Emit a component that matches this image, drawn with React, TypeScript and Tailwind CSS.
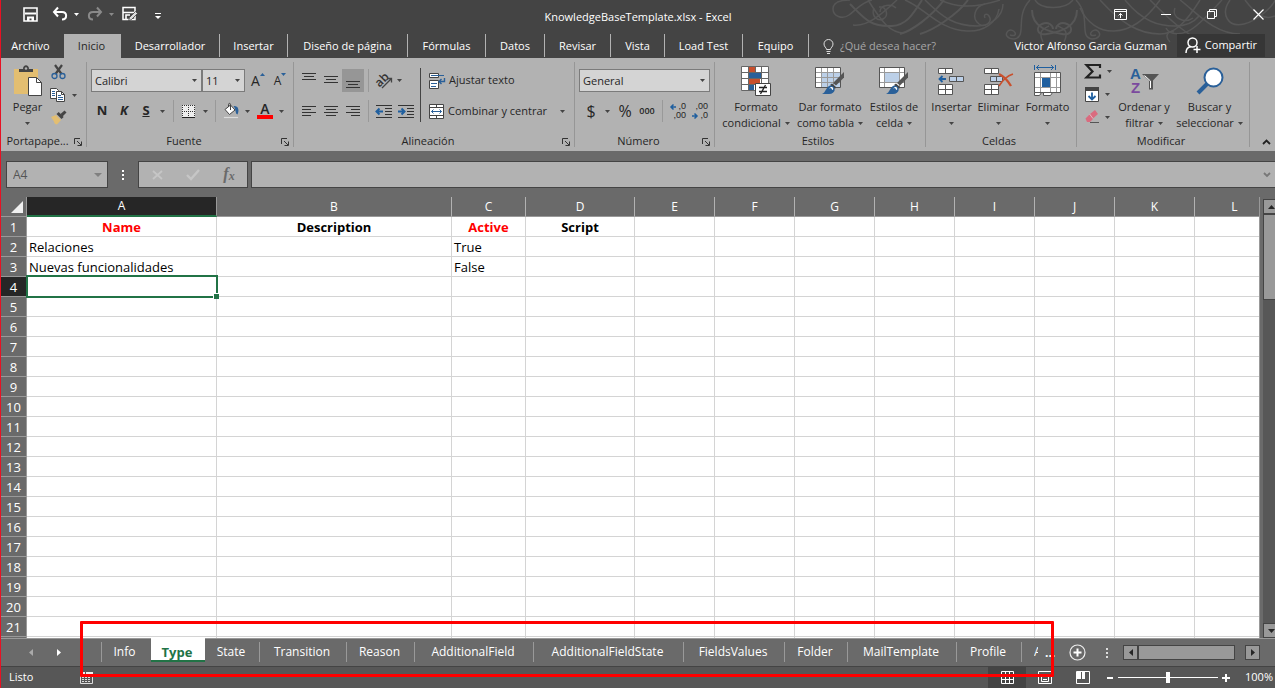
import React from "react";

/* ---------- shared bits ---------- */

function Arrow({ className = "text-[#444]" }: { className?: string }) {
  return (
    <svg width="5" height="3" viewBox="0 0 5 3" className={`shrink-0 ${className}`} aria-hidden="true">
      <path d="M0 0h5L2.5 3z" fill="currentColor" />
    </svg>
  );
}

function Svg({ w, h, children }: { w: number; h: number; children: React.ReactNode }) {
  return (
    <svg width={w} height={h} viewBox={`0 0 ${w} ${h}`} fill="none" className="shrink-0 overflow-visible" aria-hidden="true">
      {children}
    </svg>
  );
}

function Tool({ label, className = "", children }: { label: string; className?: string; children: React.ReactNode }) {
  return (
    <button type="button" aria-label={label} className={`flex shrink-0 items-center justify-center self-stretch ${className}`}>
      {children}
    </button>
  );
}

function Rule({ className = "mx-1" }: { className?: string }) {
  return <span className={`w-px shrink-0 self-stretch bg-[#999] ${className}`} />;
}

function Combo({ label, value, className }: { label: string; value: string; className: string }) {
  return (
    <label className={`relative flex h-full items-center ${className}`}>
      <select
        aria-label={label}
        className="h-full w-full appearance-none border border-[#7b7b7b] bg-[#d4d4d4] px-[3px] text-[11px] leading-none text-[#262626] outline-none"
      >
        <option>{value}</option>
      </select>
      <span className="pointer-events-none absolute right-[5px]">
        <Arrow />
      </span>
    </label>
  );
}

function Group({
  label,
  className,
  launcher = false,
  children,
}: {
  label: string;
  className: string;
  launcher?: boolean;
  children: React.ReactNode;
}) {
  return (
    <section className={`flex shrink-0 ${className}`}>
      <div className="flex min-w-0 flex-1 flex-col">
        <div className="h-[73px]">{children}</div>
        <div className="flex h-5 items-center pt-px pr-1">
          <h2 className="flex-1 truncate text-center">{label}</h2>
          {launcher && (
            <button type="button" aria-label={`Opciones de ${label}`}>
              <Svg w={8} h={8}>
                <path d="M.5 6V.5H6M3 3l4 4M7.5 3.5v4h-4" stroke="#333" />
              </Svg>
            </button>
          )}
        </div>
      </div>
      <span className="mt-1 mb-1 w-px bg-[#969696]" />
    </section>
  );
}

function Big({
  icon,
  first,
  second,
  className,
}: {
  icon: React.ReactNode;
  first: string;
  second?: string;
  className: string;
}) {
  return (
    <button type="button" className={`flex shrink-0 flex-col items-center whitespace-nowrap pt-[7px] leading-4 ${className}`}>
      <span className="mb-0.5 flex h-8 items-center">{icon}</span>
      <span>{first}</span>
      <span className="flex h-4 items-center gap-1">
        {second}
        <Arrow />
      </span>
    </button>
  );
}

/* ---------- icons ---------- */

const Clipboard = () => (
  <Svg w={30} h={32}>
    <path d="M1 4h24v25H1z" fill="#e3be71" />
    <path d="M6 7V4h4c0-5 6-5 6 0h4v3z" fill="#444" />
    <circle cx="13" cy="3.5" r="1.2" fill="#b2b2b2" />
    <path d="M15.500 12.500h8l5 5v13h-13z" fill="#fff" stroke="#444" />
    <path d="M23.500 12.500v5h5" stroke="#444" />
  </Svg>
);

const Scissors = () => (
  <Svg w={15} h={16}>
    <path d="M4 1l6.500 9M11 1l-6.500 9" stroke="#444" strokeWidth="2.200" />
    <circle cx="3.500" cy="12" r="2.500" stroke="#2a6099" strokeWidth="1.300" />
    <circle cx="11.500" cy="12" r="2.500" stroke="#2a6099" strokeWidth="1.300" />
  </Svg>
);

const Copy = () => (
  <Svg w={16} h={14}>
    <path d="M.5.5h6l2 2v8h-8z" fill="#fff" stroke="#444" />
    <path d="M2 3.500h3M2 5.500h3M2 7.500h3" stroke="#2a6099" />
    <path d="M6.500 3.500h5l3 3v7h-8z" fill="#fff" stroke="#444" />
    <path d="M11.500 3.500v3h3" stroke="#444" />
    <path d="M8 7.500h3M8 9.500h5M8 11.500h5" stroke="#2a6099" />
  </Svg>
);

const Brush = () => (
  <Svg w={16} h={15}>
    <path d="M0 7l5-2 5 5-4 4.500c-2 0-3-1.500-3-3z" fill="#e3be71" />
    <path d="M5.500 4l2.200-2 5 5-2.200 2z" fill="#444" />
    <path d="M9.500 4L13.500.500l2 2-4 4z" fill="#444" />
  </Svg>
);

const Borders = () => (
  <Svg w={13} h={13}>
    <path d="M0 0h13v13H0z" fill="#eee" />
    <path d="M0 .5h13M0 6.500h13M.5 0v12M6.500 0v12M12.500 0v12" stroke="#333" strokeDasharray="1 1" />
    <path d="M0 12.500h13" stroke="#222" />
  </Svg>
);

const Bucket = () => (
  <Svg w={16} h={16}>
    <path d="M2 6.500L7.500 2l4.500 5-5.500 4.500z" fill="#fff" stroke="#444" />
    <path d="M7.500 7V1.500c0-1.500-2-1.500-2 0V4" stroke="#444" />
    <path d="M10.500 3c5-.5 6 4 4 8.500-2.500-1-1-4-4-8.500z" fill="#2a6099" />
    <path d="M.5 13.500h15v2H.5z" fill="#ddd" stroke="#aaa" strokeWidth=".6" />
  </Svg>
);

function Lines({ rows, h = 12 }: { rows: Array<[number, number, number]>; h?: number }) {
  return (
    <Svg w={14} h={h}>
      {rows.map(([x1, x2, y]) => (
        <path key={y} d={`M${x1} ${y + 0.5}H${x2}`} stroke="#333" />
      ))}
    </Svg>
  );
}

function Indent({ into }: { into?: boolean }) {
  return (
    <Svg w={16} h={13}>
      <path d="M0 .5h16M9 3.500h7M9 6.500h7M9 9.500h7M0 12.500h16" stroke="#333" />
      {into ? (
        <path d="M0 6.500h5M3.500 3.500l3 3-3 3" stroke="#1f5f9f" strokeWidth="2" />
      ) : (
        <path d="M7 6.500H2M3.500 3.500l-3 3 3 3" stroke="#1f5f9f" strokeWidth="2" />
      )}
    </Svg>
  );
}

const Orientation = () => (
  <Svg w={17} h={16}>
    <text x="0" y="12" transform="rotate(-45 5 9)" fontSize="12" fontWeight="600" fill="#333">
      ab
    </text>
    <path d="M6 15L15 6M11.500 5.500h4v4" stroke="#444" strokeWidth="1.300" />
  </Svg>
);

const Wrap = () => (
  <Svg w={17} h={16}>
    <path d="M.5.5h9v4h-9zM.5 7.500h9v8h-9z" fill="#fff" stroke="#444" />
    <path d="M2 2.500h13M2 10.500h6M2 13.500h5" stroke="#2a6099" />
    <path d="M15.500 5v3.500H10.500M12.500 6l-2.500 2.500 2.500 2.500" stroke="#2a6099" strokeWidth="1.400" />
  </Svg>
);

const Merge = () => (
  <Svg w={15} h={15}>
    <path d="M.5.5h14v14H.5z" fill="#fff" stroke="#444" />
    <path d="M0 3.500h15M0 11.500h15M7.500 0v3.500M7.500 11.500V15" stroke="#444" />
    <path d="M2.500 7.500h10M4.500 5.500l-2 2 2 2M10.500 5.500l2 2-2 2" stroke="#2a6099" />
  </Svg>
);

function Decimals({ more }: { more?: boolean }) {
  return (
    <span className="flex w-4 flex-col font-['Liberation_Sans',sans-serif] text-[9px] leading-[9px]">
      {more ? (
        <>
          <span className="flex items-center justify-end gap-0.5">
            <Svg w={6} h={6}>
              <path d="M1 3h5M3.500.500L1 3l2.500 2.500" stroke="#1f5f9f" strokeWidth="1.500" />
            </Svg>
            ,0
          </span>
          <span className="text-right">,00</span>
        </>
      ) : (
        <>
          <span className="text-right">,00</span>
          <span className="flex items-center justify-end gap-0.5">
            <Svg w={6} h={6}>
              <path d="M0 3h5M2.500.500L5 3 2.500 5.500" stroke="#1f5f9f" strokeWidth="1.500" />
            </Svg>
            ,0
          </span>
        </>
      )}
    </span>
  );
}

const Conditional = () => (
  <Svg w={31} h={31}>
    <path d="M.5.5h27v24H.5z" fill="#fff" />
    <path d="M8 1h6v6H8z M8 13h11v6H8z" fill="#c9502d" />
    <path d="M8 7h12v6H8z M8 19h5v6H8z" fill="#2a6099" />
    <path d="M.5.5h27v24H.5zM7.500.5v24M14.500.5v6M20.500.5v24M.5 6.500h27M.5 12.500h27M.5 18.500h27" stroke="#666" />
    <path d="M14.500 17.500h15v12h-15z" fill="#fff" stroke="#444" />
    <path d="M18 21.500h8M18 25.500h8M24.500 19l-5 9" stroke="#222" strokeWidth="1.300" />
  </Svg>
);

const StyleBrush = () => (
  <>
    <path d="M29 6v5.500l-8 8-3-2.500z" fill="#555" />
    <path d="M17 17.500l4 3.500-1 2-5-4z" fill="#444" />
    <path d="M7 28c4-1 4-8.500 9-8.500 5.500 1 5 8.500-2 8.500z" fill="#2a6099" />
    <path d="M14 22.500c2-2.500 5-2 4 1.500-1 0-1-1-2-2z" fill="#fff" />
  </>
);

const TableFormat = () => (
  <Svg w={30} h={30}>
    <path d="M.5 1.500h25v20H.5z" fill="#fff" />
    <path d="M6.500 6.500h19v15h-19z" fill="#bcd0e8" />
    <path d="M6.500 1.500v20M12.500 1.500v20M18.500 1.500v20M.5 6.500h25M.5 11.500h25M.5 16.500h25" stroke="#999" />
    <path d="M.5 1.500h25v20H.5z" stroke="#555" />
    <StyleBrush />
  </Svg>
);

const CellStyles = () => (
  <Svg w={30} h={30}>
    <path d="M.5 1.500h25v20H.5z" fill="#fff" />
    <path d="M5.500 6.500h15v10h-15z" fill="#bcd0e8" />
    <path d="M5.500 1.500v20M20.500 1.500v20M.5 6.500h25M.5 16.500h25" stroke="#999" />
    <path d="M.5 1.500h25v20H.5z" stroke="#555" />
    <StyleBrush />
  </Svg>
);

const InsertCells = () => (
  <Svg w={27} h={28}>
    <path d="M.5 1.500h14v5H.5zM7.500 1.500v5M.5 17.500h14v10H.5zM7.500 17.500v10M.5 22.500h14" fill="#fff" stroke="#555" />
    <path d="M11.500 9.500h14v5h-14zM18.500 9.500v5" fill="#bcd0e8" stroke="#555" />
    <path d="M8 12H2M4.500 9L1.500 12l3 3" stroke="#1f5f9f" strokeWidth="1.800" />
  </Svg>
);

const DeleteCells = () => (
  <Svg w={30} h={28}>
    <path d="M.5 1.500h14v5H.5zM7.500 1.500v5M.5 17.500h14v10H.5zM7.500 17.500v10M.5 22.500h14" fill="#fff" stroke="#555" />
    <path d="M6.500 9.500h12v5h-12zM12.500 9.500v5" fill="#bcd0e8" stroke="#555" />
    <path d="M15 7c4 2 9 7 12 12" stroke="#c9502d" strokeWidth="2.400" />
    <path d="M29 7c-6 2-11 7-14 12" stroke="#c9502d" strokeWidth="1.600" />
  </Svg>
);

const FormatCells = () => (
  <Svg w={29} h={32}>
    <path d="M1.500 0v5M22.500 0v5M3 2.500h18M6 0L3.500 2.500 6 5M18 0l2.500 2.500L18 5" stroke="#1f5f9f" />
    <path d="M1.500 7.500h26v20h-26z" fill="#fff" />
    <path d="M9 12h8v10H9z" fill="#1f5f9f" />
    <path d="M7.500 7.500v20M17.500 7.500v20M23.500 7.500v20M1.500 12.500h26M1.500 22.500h26" stroke="#999" />
    <path d="M1.500 7.500h26v20h-26z" stroke="#555" />
    <path d="M1.500 27.500h7l-2 3h-5zM10.500 27.500h9l-2 3h-7z" fill="#fff" stroke="#555" />
  </Svg>
);

const Fill = () => (
  <Svg w={14} h={15}>
    <path d="M.5.5h13v14H.5z" fill="#fff" stroke="#444" />
    <path d="M0 0h14v4H0z" fill="#444" />
    <path d="M7 5.500v7M3.500 9L7 12.500 10.500 9" stroke="#1f5f9f" strokeWidth="1.800" />
  </Svg>
);

const Eraser = () => (
  <Svg w={15} h={14}>
    <path d="M5 4l5-4 3 4-5 4.500z" fill="#da6b7f" />
    <path d="M4.500 4.500l3.500 4.500-3 3H2L.5 8.500z" fill="#da6b7f" />
    <path d="M4.700 4.200l3.300 4.300" stroke="#eab0bb" />
    <path d="M5 12.500h9" stroke="#555" />
  </Svg>
);

const SortFilter = () => (
  <span className="flex items-center">
    <span className="flex w-3 flex-col items-center font-['Liberation_Sans',sans-serif] text-[15px] leading-[14px] font-bold">
      <span className="text-[#2a6099]">A</span>
      <span className="text-[#7b4a9e]">Z</span>
    </span>
    <Svg w={17} h={30}>
      <path d="M0 8h17l-6 6.500v9H7v-9z" fill="#555" />
      <path d="M2.500 9.500l6 5.500v7" stroke="#fff" />
    </Svg>
  </span>
);

const Search = () => (
  <Svg w={28} h={30}>
    <path d="M11 18L2 27" stroke="#2a6099" strokeWidth="4" />
    <circle cx="17.500" cy="11.500" r="9" fill="#fff" stroke="#2a6099" strokeWidth="2" />
  </Svg>
);

const Swirls = () => (
  <svg
    className="pointer-events-none absolute top-0 right-0"
    width="445"
    height="44"
    viewBox="830 0 445 44"
    fill="none"
    stroke="#565656"
    strokeWidth="1.500"
    aria-hidden="true"
  >
    <path d="M850 0c-8 0-17 2-17 9s9 11 16 6S862 2 872 0" />
    <path d="M850 4c14 14 20 23 42 22 14-1 20-10 30-26" strokeWidth="2" />
    <path d="M853 25c14 2 28-10 44-25M868 0c14 22 22 33 36 33" />
    <path d="M880 12c0-8 12-8 16-4M874 8c-3 7 3 14 9 11s4-13-4-12" />
    <path d="M900 34c12-3 32-18 44-34M920 34c14-4 38-20 48-34" strokeWidth="2" />
    <path d="M905 0c20 8 34 30 62 31 16 1 30-8 32-22" />
    <path d="M925 0c18 18 30 26 52 26 14 0 26-10 26-22" />
    <path d="M985 18c-2-4 2-5 4-2 4 6-4 12-10 8-8-6-4-18 6-20" />
    <path d="M940 0c14 6 30 10 60 0" />
    <path d="M1032 10c0 18 18 22 30 24 10 2 12-7 5-10s-11 2-11 5" strokeWidth="2" />
    <path d="M1077 10c0 18-18 22-30 24-10 2-12-7-5-10s11 2 11 5" strokeWidth="2" />
    <path d="M1010 35c10 3 4-8-2-4-4 4 0 8 6 8 14-2 0-22 16-39M1096 35c-10 3-4-8 2-4 4 4 0 8-6 8-14-2 0-22-16-39" />
    <path d="M1035 0c6 10 30 10 38 0M1043 42c-6-12 2-14 6-16M1064 42c6-12-2-14-6-16" />
    <path d="M1080 8c14 30 50 34 80-8M1100 0c20 22 38 34 60 34 14 0 25-10 40-34" />
    <path d="M1125 0c18 22 34 26 50 26 12 0 20-5 24-10M1150 0c14 14 38 38 56 42" />
    <path d="M1166 28c4 8 18 8 30-2s20-20 26-26M1175 8c-4 10 10 16 18 10M1180 0c16 12 34 34 60 34" />
    <path d="M1170 42c-6-6-2-12 4-10M1230 0c-10 14-2 28 14 24s30-20 31-24M1245 0c12 16 20 20 30 16" />
  </svg>
);

/* ---------- data ---------- */

const ribbonTabs = [
  { name: "Desarrollador", width: "w-[99px]" },
  { name: "Insertar", width: "w-[68px]" },
  { name: "Diseño de página", width: "w-[120px]" },
  { name: "Fórmulas", width: "w-[78px]" },
  { name: "Datos", width: "w-[59px]" },
  { name: "Revisar", width: "w-[66px]" },
  { name: "Vista", width: "w-[54px]" },
  { name: "Load Test", width: "w-[78px]" },
  { name: "Equipo", width: "w-[66px]" },
];

const columns = [
  { id: "A", width: "w-[190px]" },
  { id: "B", width: "w-[235px]" },
  { id: "C", width: "w-[74px]" },
  { id: "D", width: "w-[109px]" },
  ...["E", "F", "G", "H", "I", "J", "K", "L"].map((id) => ({ id, width: "w-20" })),
];

const cells: Record<string, { text: string; style?: string }> = {
  A1: { text: "Name", style: "text-center font-bold text-[#f00]" },
  B1: { text: "Description", style: "text-center font-bold" },
  C1: { text: "Active", style: "text-center font-bold text-[#f00]" },
  D1: { text: "Script", style: "text-center font-bold" },
  A2: { text: "Relaciones" },
  C2: { text: "True" },
  A3: { text: "Nuevas funcionalidades" },
  C3: { text: "False" },
};

const sheets = [
  { name: "Info", width: "w-[49px]" },
  { name: "Type", width: "w-[54px]" },
  { name: "State", width: "w-[55px]" },
  { name: "Transition", width: "w-[87px]" },
  { name: "Reason", width: "w-[68px]" },
  { name: "AdditionalField", width: "w-[119px]" },
  { name: "AdditionalFieldState", width: "w-[150px]" },
  { name: "FieldsValues", width: "w-[101px]" },
  { name: "Folder", width: "w-[63px]" },
  { name: "MailTemplate", width: "w-[109px]" },
  { name: "Profile", width: "w-[65px]" },
];

/* ---------- sections ---------- */

function TitleBar() {
  return (
    <div className="relative flex h-[34px] items-start text-white">
      <div className="flex h-[28px] flex-1 items-center">
        <Tool label="Guardar" className="ml-[22px]">
          <Svg w={15} h={15}>
            <path d="M1 1h13v13H1z" stroke="#fff" strokeWidth="1.600" />
            <path d="M2 6.500h11" stroke="#fff" strokeWidth="2" />
            <path d="M4 14V9.500h7V14H8.500v-2.500h-2V14z" fill="#fff" />
          </Svg>
        </Tool>
        <Tool label="Deshacer" className="ml-[14px] gap-1.5">
          <Svg w={16} h={14}>
            <path d="M6 .5L2 5l4 4.500M2 5h8c5.500 0 5.500 7.500 0 7.500" stroke="#fff" strokeWidth="2" />
          </Svg>
          <Arrow className="text-white" />
        </Tool>
        <Tool label="Rehacer" className="ml-2 gap-1.5">
          <Svg w={16} h={14}>
            <path d="M10 .5L14 5l-4 4.500M14 5H6C.5 5 .5 12.500 6 12.500" stroke="#8a8a8a" strokeWidth="2" />
          </Svg>
          <Arrow className="text-[#8a8a8a]" />
        </Tool>
        <Tool label="Guardar como" className="ml-2">
          <Svg w={16} h={16}>
            <path d="M1 1.500h12v12H1zM1.500 6.500h11" stroke="#fff" strokeWidth="1.500" />
            <path d="M4 13V9h4" stroke="#fff" strokeWidth="1.600" />
            <path d="M6.500 15l1-3.500 6-6 2 2-6 6z" fill="#ddd" stroke="#444" strokeWidth=".8" />
          </Svg>
        </Tool>
        <Tool label="Personalizar barra" className="ml-[17px] pt-1">
          <Svg w={6} h={7}>
            <path d="M0 .5h6" stroke="#fff" />
            <path d="M0 3h6L3 6z" fill="#fff" />
          </Svg>
        </Tool>
      </div>
      <h1 className="pt-2 leading-[18px]">KnowledgeBaseTemplate.xlsx - Excel</h1>
      <div className="flex h-[28px] flex-1 items-center justify-end gap-3">
        <Tool label="Opciones de la cinta" className="w-[34px]">
          <Svg w={13} h={11}>
            <path d="M.5.5h12v10H.5zM.5 2.500h12M6.500 9V4.500M4.500 6.500l2-2 2 2" stroke="#fff" />
          </Svg>
        </Tool>
        <Tool label="Minimizar" className="w-[34px]">
          <Svg w={10} h={11}>
            <path d="M0 5.500h10" stroke="#fff" />
          </Svg>
        </Tool>
        <Tool label="Restaurar" className="w-[34px]">
          <Svg w={10} h={10}>
            <path d="M.5 2.500h7v7h-7zM2.500 2V.5h7v7H8" stroke="#fff" />
          </Svg>
        </Tool>
        <Tool label="Cerrar" className="w-[34px]">
          <Svg w={11} h={11}>
            <path d="M.5.5l10 10M10.500.5l-10 10" stroke="#fff" strokeWidth="1.200" />
          </Svg>
        </Tool>
      </div>
    </div>
  );
}

function RibbonTabs() {
  return (
    <nav className="relative flex h-6 items-stretch text-white">
      <button type="button" className="w-[63px] shrink-0 pr-1">Archivo</button>
      <button type="button" className="w-[57px] shrink-0 bg-[#b2b2b2] pr-0.5 text-[#262626]">Inicio</button>
      {ribbonTabs.map((t) => (
        <button
          key={t.name}
          type="button"
          className={`mb-px shrink-0 whitespace-nowrap border-r border-[#b2b2b2] pt-px ${t.width}`}
        >
          {t.name}
        </button>
      ))}
      <label className="flex min-w-0 flex-1 items-center gap-1.5 pl-[14px]">
        <Svg w={11} h={15}>
          <path d="M3.500 10.500c0-2-2.500-2.500-2.500-5.500a4.500 4.500 0 019 0c0 3-2.500 3.500-2.500 5.500zM3.500 12.500h4M4 14.500h3" stroke="#ddd" />
        </Svg>
        <input
          type="text"
          aria-label="¿Qué desea hacer?"
          placeholder="¿Qué desea hacer?"
          className="w-full min-w-0 bg-transparent outline-none placeholder:text-[#a6a6a6]"
        />
      </label>
      <button type="button" className="shrink-0 whitespace-nowrap pr-[10px]">Victor Alfonso Garcia Guzman</button>
      <button type="button" className="mr-[10px] mb-px flex w-[88px] shrink-0 items-center justify-center gap-1 bg-[#363636]">
        <Svg w={16} h={17}>
          <circle cx="7.500" cy="5.500" r="4.500" stroke="#fff" strokeWidth="1.500" />
          <path d="M1 16c0-4 2-6 5-6.500M12 9v7M8.500 12.500h7" stroke="#fff" strokeWidth="1.500" />
        </Svg>
        Compartir
      </button>
    </nav>
  );
}

function Ribbon() {
  return (
    <div className="relative flex h-[93px] overflow-hidden bg-[#b2b2b2]">
      <Group label="Portapape..." className="w-[86px]" launcher>
        <div className="flex">
          <Big icon={<Clipboard />} first="Pegar" className="w-[49px] pl-1" />
          <div className="flex flex-col gap-2 pt-[6px]">
            <Tool label="Cortar" className="w-4"><Scissors /></Tool>
            <Tool label="Copiar" className="gap-1.5"><Copy /><Arrow /></Tool>
            <Tool label="Copiar formato" className="w-[18px]"><Brush /></Tool>
          </div>
        </div>
      </Group>

      <Group label="Fuente" className="w-[207px]" launcher>
        <div className="pt-[11px] pl-1">
          <div className="flex h-[23px] items-center">
            <Combo label="Fuente" value="Calibri" className="w-[111px]" />
            <Combo label="Tamaño" value="11" className="w-[43px]" />
            <Tool label="Aumentar tamaño" className="ml-[5px] w-4">
              <span className="text-sm leading-6">A</span>
              <Svg w={5} h={20}><path d="M0 5l2.500-3L5 5z" fill="#2a6099" /></Svg>
            </Tool>
            <Tool label="Reducir tamaño" className="ml-[6px] w-4">
              <span className="text-xs leading-6">A</span>
              <Svg w={5} h={20}><path d="M0 2l2.500 3L5 2z" fill="#2a6099" /></Svg>
            </Tool>
          </div>
          <div className="mt-2 flex h-[22px] items-center">
            <Tool label="Negrita" className="w-[22px] text-[13px] font-bold">N</Tool>
            <Tool label="Cursiva" className="w-[22px] text-[13px] font-bold italic">K</Tool>
            <Tool label="Subrayado" className="w-[22px] text-[13px] font-bold underline">S</Tool>
            <Tool label="Tipo de subrayado" className="w-[10px]"><Arrow /></Tool>
            <Rule className="mr-2 ml-[6px]" />
            <Tool label="Bordes" className="gap-2"><Borders /><Arrow /></Tool>
            <Rule className="mx-[7px]" />
            <Tool label="Color de relleno" className="gap-1.5"><Bucket /><Arrow /></Tool>
            <Tool label="Color de fuente" className="ml-[7px] gap-1.5">
              <span className="flex h-4 w-4 items-center justify-center border-b-4 border-[#f00] text-sm leading-none font-semibold">A</span>
              <Arrow />
            </Tool>
          </div>
        </div>
      </Group>

      <Group label="Alineación" className="w-[281px]" launcher>
        <div className="flex pt-[10px] pl-1">
          <div className="flex flex-col gap-2 pt-px">
            <div className="flex h-[23px]">
              <Tool label="Alinear arriba" className="w-[22px]"><Lines h={15} rows={[[0, 14, 0], [2, 12, 3], [0, 14, 6]]} /></Tool>
              <Tool label="Alinear en medio" className="w-[22px]"><Lines h={15} rows={[[0, 14, 3], [2, 12, 6], [0, 14, 9]]} /></Tool>
              <Tool label="Alinear abajo" className="w-[22px] bg-[#969696]"><Lines h={15} rows={[[0, 14, 8], [2, 12, 11], [0, 14, 14]]} /></Tool>
              <Rule className="mr-[7px] ml-1" />
              <Tool label="Orientación" className="gap-1"><Orientation /><Arrow /></Tool>
            </div>
            <div className="flex h-[22px]">
              <Tool label="Izquierda" className="w-[22px]"><Lines rows={[[0, 14, 1], [0, 9, 4], [0, 14, 7], [0, 9, 10]]} /></Tool>
              <Tool label="Centro" className="w-[22px]"><Lines rows={[[0, 14, 1], [2, 12, 4], [0, 14, 7], [2, 12, 10]]} /></Tool>
              <Tool label="Derecha" className="w-[22px]"><Lines rows={[[0, 14, 1], [5, 14, 4], [0, 14, 7], [5, 14, 10]]} /></Tool>
              <Rule className="mr-[7px] ml-1" />
              <Tool label="Disminuir sangría" className="w-4"><Indent /></Tool>
              <Tool label="Aumentar sangría" className="ml-[6px] w-4"><Indent into /></Tool>
            </div>
          </div>
          <span className="mr-2 ml-[6px] w-px bg-[#444]" />
          <div className="flex flex-col gap-2 pt-px">
            <button type="button" className="flex h-[23px] items-center gap-[3px]">
              <Wrap /> Ajustar texto
            </button>
            <button type="button" className="flex h-[22px] items-center gap-1 whitespace-nowrap">
              <Merge /> <span className="w-[108px] text-left">Combinar y centrar</span> <Arrow />
            </button>
          </div>
        </div>
      </Group>

      <Group label="Número" className="w-[140px]" launcher>
        <div className="pt-[11px] pl-1">
          <div className="flex h-[23px]">
            <Combo label="Formato de número" value="General" className="w-[131px]" />
          </div>
          <div className="mt-2 flex h-[22px] items-center">
            <Tool label="Contabilidad" className="w-6 text-base">$</Tool>
            <Tool label="Monedas" className="w-2"><Arrow /></Tool>
            <Tool label="Porcentaje" className="w-7 text-base">%</Tool>
            <Tool label="Millares" className="w-4 text-[9px] font-semibold">000</Tool>
            <Rule className="mx-[7px]" />
            <Tool label="Aumentar decimales"><Decimals more /></Tool>
            <Tool label="Disminuir decimales" className="ml-[6px]"><Decimals /></Tool>
          </div>
        </div>
      </Group>

      <Group label="Estilos" className="w-[211px]">
        <div className="flex">
          <Big icon={<Conditional />} first="Formato" second="condicional" className="w-[82px]" />
          <Big icon={<TableFormat />} first="Dar formato" second="como tabla" className="w-[66px]" />
          <Big icon={<CellStyles />} first="Estilos de" second="celda" className="w-[62px]" />
        </div>
      </Group>

      <Group label="Celdas" className="w-[151px]">
        <div className="flex pl-0.5">
          <Big icon={<InsertCells />} first="Insertar" className="w-[47px]" />
          <Big icon={<DeleteCells />} first="Eliminar" className="w-[47px]" />
          <Big icon={<FormatCells />} first="Formato" className="w-[51px]" />
        </div>
      </Group>

      <Group label="Modificar" className="w-[173px]">
        <div className="flex">
          <div className="flex w-[34px] flex-col items-start gap-2 pt-[6px] pl-2">
            <button type="button" aria-label="Autosuma" className="flex items-center gap-1.5">
              <Svg w={16} h={15}><path d="M15 4V1H1.500l6 6.500-6 6H15v-3" stroke="#222" strokeWidth="2.200" /></Svg>
              <Arrow />
            </button>
            <button type="button" aria-label="Rellenar" className="flex items-center gap-1.5"><Fill /><Arrow /></button>
            <button type="button" aria-label="Borrar" className="flex items-center gap-[5px]"><Eraser /><Arrow /></button>
          </div>
          <Big icon={<SortFilter />} first="Ordenar y" second="filtrar" className="w-[66px]" />
          <Big icon={<Search />} first="Buscar y" second="seleccionar" className="w-[65px]" />
        </div>
      </Group>

      <button type="button" aria-label="Contraer la cinta" className="ml-auto flex items-end pr-1 pb-1.5">
        <Svg w={9} h={6}>
          <path d="M1 5l3.500-3.500L8 5" stroke="#222" strokeWidth="1.800" />
        </Svg>
      </button>
    </div>
  );
}

function FormulaBar() {
  return (
    <div className="flex h-[46px] bg-[#6a6a6a] pt-[10px] pb-[9px] pl-[5px] text-xs">
      <label className="relative flex w-[102px] shrink-0 items-center">
        <input
          type="text"
          aria-label="Cuadro de nombres"
          defaultValue="A4"
          className="h-full w-full border border-[#444] bg-[#b2b2b2] px-1.5 text-[#555] outline-none"
        />
        <svg width="8" height="4" viewBox="0 0 8 4" className="absolute right-1.5" aria-hidden="true">
          <path d="M0 0h8L4 4z" fill="#808080" />
        </svg>
      </label>
      <span className="flex w-[30px] shrink-0 items-center justify-center">
        <Svg w={2} h={10}>
          <path d="M0 0h2v2H0zM0 4h2v2H0zM0 8h2v2H0z" fill="#fff" />
        </Svg>
      </span>
      <div className="flex w-[110px] shrink-0 items-center border border-[#444] bg-[#b2b2b2]">
        <Tool label="Cancelar" className="flex-1">
          <Svg w={11} h={10}><path d="M1 1l9 8M10 1L1 9" stroke="#c6c6c6" strokeWidth="1.800" /></Svg>
        </Tool>
        <Tool label="Introducir" className="flex-1">
          <Svg w={14} h={11}><path d="M1 6l4 4 8-9" stroke="#c6c6c6" strokeWidth="2.400" /></Svg>
        </Tool>
        <Tool label="Insertar función" className="flex-1 pb-0.5 font-['Liberation_Serif',serif] text-base font-bold text-[#6a6a6a] italic">
          f<span className="pt-1 text-xs">x</span>
        </Tool>
      </div>
      <label className="relative ml-[3px] flex min-w-0 flex-1 items-center">
        <input
          type="text"
          aria-label="Barra de fórmulas"
          className="h-full w-full border border-r-0 border-[#444] bg-[#b2b2b2] px-1 outline-none"
        />
        <svg width="8" height="6" viewBox="0 0 8 6" fill="none" className="absolute right-1" aria-hidden="true">
          <path d="M1 1l3 3 3-3" stroke="#777" strokeWidth="1.800" />
        </svg>
      </label>
    </div>
  );
}

function Sheet() {
  const rows = Array.from({ length: 22 }, (_, i) => i + 1);
  return (
    <div className="flex min-h-0 flex-1 bg-[#6a6a6a]">
      <div className="min-w-0 flex-1 overflow-hidden border-r border-[#999]">
        <table className="w-[1274px] table-fixed border-separate border-spacing-0 text-[13px] leading-[18px] text-black">
          <thead>
            <tr className="h-5 font-normal text-white">
              <th className="w-[26px] border-r border-b border-[#999] p-0">
                <svg width="12" height="12" viewBox="0 0 12 12" className="ml-auto mr-[3px]" aria-hidden="true">
                  <path d="M12 0v12H0z" fill="#f0f0f0" />
                </svg>
              </th>
              {columns.map((c) => (
                <th
                  key={c.id}
                  scope="col"
                  className={`border-r p-0 text-xs leading-[18px] font-normal ${c.width} ${
                    c.id === "A" ? "border-b-2 border-r-[#999] border-b-[#217346] bg-[#262626]" : "border-b border-r-[#b2b2b2] border-b-[#999]"
                  }`}
                >
                  {c.id}
                </th>
              ))}
            </tr>
          </thead>
          <tbody>
            {rows.map((r) => (
              <tr key={r} className="h-5">
                <th
                  scope="row"
                  className={`border-r border-b border-[#999] px-0 pt-px pb-0 font-normal text-white ${r === 4 ? "bg-[#262626]" : ""}`}
                >
                  {r}
                </th>
                {columns.map((c) => {
                  const cell = cells[`${c.id}${r}`];
                  const active = c.id === "A" && r === 4;
                  return (
                    <td
                      key={c.id}
                      className={`whitespace-nowrap border-r border-b border-[#d4d4d4] bg-white px-0.5 pt-px pb-0 ${
                        active ? "relative" : ""
                      } ${cell?.style ?? ""}`}
                    >
                      {cell?.text}
                      {active && (
                        <span className="absolute -top-0.5 -right-0.5 -bottom-0.5 -left-px border-2 border-[#217346]">
                          <span className="absolute -right-[3px] -bottom-[3px] h-1.5 w-1.5 border-t border-l border-white bg-[#217346]" />
                        </span>
                      )}
                    </td>
                  );
                })}
              </tr>
            ))}
          </tbody>
        </table>
      </div>
      <div className="mt-0.5 ml-[3px] w-3 shrink-0 overflow-hidden bg-[#575757]">
        <div className="flex h-full w-4 flex-col">
          <button type="button" aria-label="Subir" className="flex h-[15px] shrink-0 items-center justify-center border border-[#444] bg-[#999]">
            <Svg w={7} h={4}><path d="M0 4h7L3.500 0z" fill="#262626" /></Svg>
          </button>
          <div className="h-[86px] shrink-0 border border-[#444] bg-[#999]" />
          <button type="button" aria-label="Bajar" className="mt-auto flex h-[15px] shrink-0 items-center justify-center border border-[#444] bg-[#999]">
            <Svg w={7} h={4}><path d="M0 0h7L3.500 4z" fill="#262626" /></Svg>
          </button>
        </div>
      </div>
    </div>
  );
}

function SheetTabs() {
  return (
    <nav className="flex h-7 border-t border-[#999] bg-[#6a6a6a] pr-[15px] text-xs text-white">
      <div className="mt-[3px] mb-1 flex w-[101px] shrink-0 items-center gap-6 border-r border-[#999] pl-7">
        <button type="button" aria-label="Hoja anterior">
          <Svg w={4} h={7}><path d="M4 0v7L0 3.500z" fill="#aaa" /></Svg>
        </button>
        <button type="button" aria-label="Hoja siguiente">
          <Svg w={4} h={7}><path d="M0 0v7l4-3.500z" fill="#fff" /></Svg>
        </button>
      </div>
      {sheets.map((s) => (
        <button
          key={s.name}
          type="button"
          className={`mb-1 shrink-0 whitespace-nowrap ${s.width} ${
            s.name === "Type"
              ? "-mt-px border-b-2 border-[#217346] bg-white pt-1 pr-0.5 text-[13px] leading-5 font-bold text-[#217346]"
              : s.name === "Info"
                ? "mt-[3px] pr-1"
                : "mt-[3px] border-r border-[#999] pr-0.5"
          }`}
        >
          {s.name}
        </button>
      ))}
      <button type="button" aria-label="A" className="ml-[12px] w-[4px] shrink-0 overflow-hidden pb-0.5 text-left">A</button>
      <span className="ml-[7px] w-[15px] shrink-0 self-center font-bold">...</span>
      <button type="button" aria-label="Hoja nueva" className="ml-[9px] shrink-0">
        <Svg w={17} h={17}>
          <circle cx="8.500" cy="8.500" r="7.500" stroke="#eee" strokeWidth="1.200" />
          <path d="M8.500 4.500v8M4.500 8.500h8" stroke="#fff" strokeWidth="2" />
        </Svg>
      </button>
      <span className="ml-auto flex items-center pr-[15px]">
        <Svg w={2} h={10}>
          <path d="M0 0h2v2H0zM0 4h2v2H0zM0 8h2v2H0z" fill="#ddd" />
        </Svg>
      </span>
      <div className="flex w-[137px] shrink-0 items-center">
        <button type="button" aria-label="Izquierda" className="flex h-[15px] w-[15px] items-center justify-center border border-[#444] bg-[#999]">
          <Svg w={4} h={7}><path d="M4 0v7L0 3.500z" fill="#262626" /></Svg>
        </button>
        <div className="h-[15px] w-[97px] border border-[#444] bg-[#999]" />
        <button type="button" aria-label="Derecha" className="ml-auto flex h-[15px] w-[15px] items-center justify-center border border-[#444] bg-[#999]">
          <Svg w={4} h={7}><path d="M0 0v7l4-3.500z" fill="#262626" /></Svg>
        </button>
      </div>
    </nav>
  );
}

function StatusBar() {
  return (
    <footer className="flex h-[22px] items-center border-t border-[#444] bg-[#575757] text-[11px] text-white">
      <span className="w-[71px] pl-2">Listo</span>
      <button type="button" aria-label="Grabar macro" className="ml-2">
        <Svg w={13} h={13}>
          <path d="M.5 4v8.500h12V4" stroke="#ddd" />
          <path d="M0 1h5v3H0zM6 1h7v3H6z" fill="#eee" />
          <path d="M2 6.500h9M2 8.500h9M2 10.500h9" stroke="#ddd" strokeDasharray="2 1" />
        </Svg>
      </button>
      <div className="ml-auto flex h-full items-center">
        <Tool label="Normal" className="w-[38px] bg-[#444]">
          <Svg w={13} h={13}><path d="M.5.5h12v12H.5zM4.500 0v13M8.500 0v13M0 4.500h13M0 8.500h13" stroke="#fff" /></Svg>
        </Tool>
        <Tool label="Diseño de página" className="w-[38px]">
          <Svg w={14} h={13}><path d="M.5.5h13v12H.5zM3.500 3.500h7v7h-7zM5 5.500h4M5 8.500h4" stroke="#fff" /></Svg>
        </Tool>
        <Tool label="Salto de página" className="w-[38px]">
          <Svg w={14} h={13}><path d="M.5.5h13v12H.5z" stroke="#fff" /><path d="M1 1h4v7H1zM6 1h3v7H6z" fill="#fff" /></Svg>
        </Tool>
        <Tool label="Alejar" className="w-[12px] ml-0.5">
          <Svg w={6} h={2}><path d="M0 0h6v2H0z" fill="#fff" /></Svg>
        </Tool>
        <input
          type="range"
          aria-label="Zoom"
          min="10"
          max="190"
          defaultValue="100"
          className="ml-0.5 w-[100px] appearance-none bg-transparent [&::-webkit-slider-runnable-track]:h-px [&::-webkit-slider-runnable-track]:bg-white [&::-webkit-slider-thumb]:-mt-[5px] [&::-webkit-slider-thumb]:h-[11px] [&::-webkit-slider-thumb]:w-1 [&::-webkit-slider-thumb]:appearance-none [&::-webkit-slider-thumb]:bg-white"
        />
        <Tool label="Acercar" className="w-4">
          <Svg w={8} h={8}><path d="M0 4h8M4 0v8" stroke="#fff" strokeWidth="2" /></Svg>
        </Tool>
        <span className="w-[41px] pr-0.5 text-right">100%</span>
      </div>
    </footer>
  );
}

export default function App() {
  return (
    <div className="flex h-screen flex-col overflow-hidden border-l border-[#e81123] bg-[#6a6a6a] font-['Open_Sans','Noto_Sans',sans-serif] text-[11px] text-[#262626]">
      <header className="relative shrink-0 bg-[#444]">
        <Swirls />
        <TitleBar />
        <RibbonTabs />
        <Ribbon />
      </header>
      <FormulaBar />
      <Sheet />
      <div className="relative shrink-0">
        <SheetTabs />
        <StatusBar />
        <div className="pointer-events-none absolute -top-[17px] left-[79px] h-14 w-[974px] rounded-[1px] border-[3px] border-[#f00]" />
      </div>
    </div>
  );
}
